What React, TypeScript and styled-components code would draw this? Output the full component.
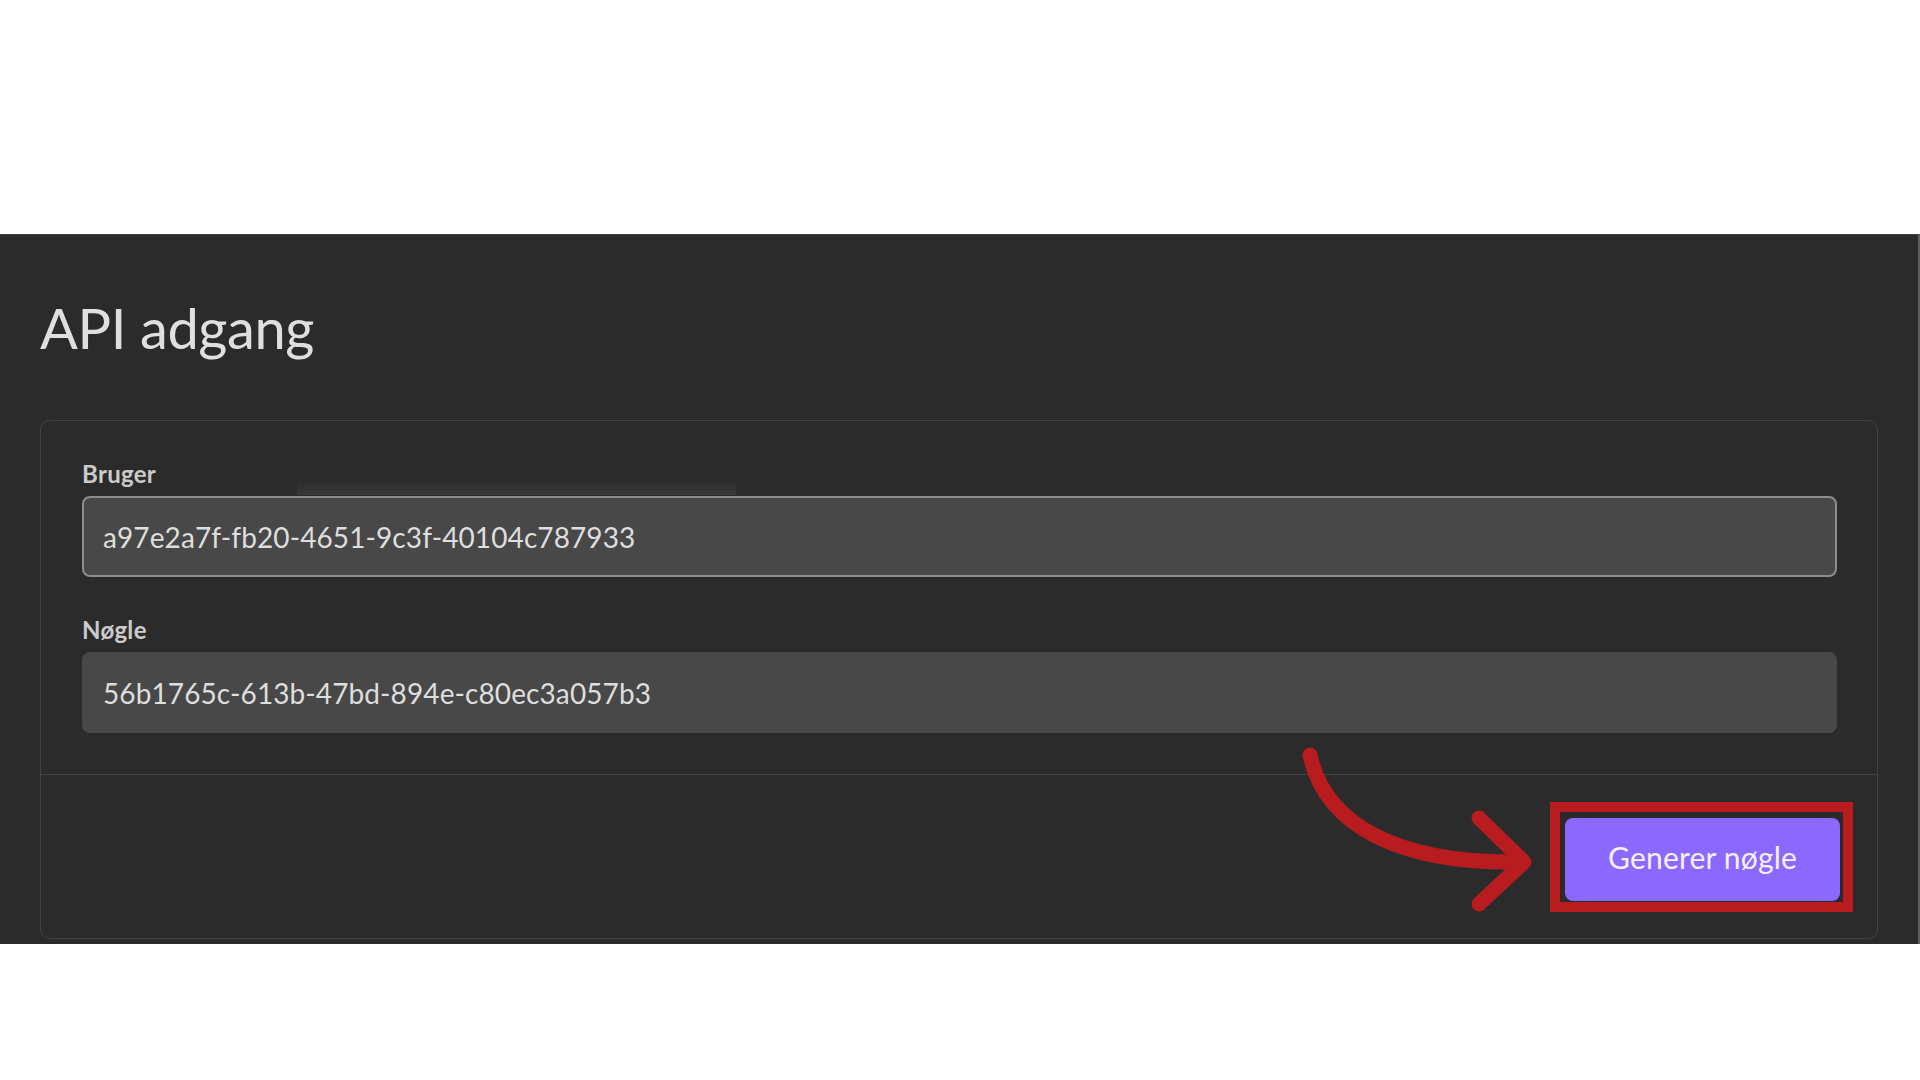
import React from 'react';
import styled, { createGlobalStyle } from 'styled-components';

const GlobalStyle = createGlobalStyle`
  html, body {
    margin: 0;
    padding: 0;
    background: #ffffff;
  }
  body {
    font-family: Lato, "Open Sans", "Liberation Sans", sans-serif;
  }
`;

const Page = styled.div`
  position: relative;
  width: 1920px;
  height: 1080px;
  padding-top: 234px;
  box-sizing: border-box;
`;

const Panel = styled.section`
  box-sizing: border-box;
  width: 1920px;
  background: #2b2b2b;
  border-top: 1px solid #3d3d3d;
  border-right: 2px solid #5e5e5e;
  padding: 59px 40px 5px 40px;
  display: flex;
  flex-direction: column;
`;

const Title = styled.h1`
  margin: 0 0 58px 0;
  font-size: 56px;
  line-height: 68px;
  font-weight: 400;
  color: #dfdfdf;
  letter-spacing: -0.4px;
`;

const Card = styled.div`
  border: 1px solid #434343;
  border-radius: 10px;
  display: flex;
  flex-direction: column;
`;

const CardBody = styled.div`
  padding: 39px 40px 41px 41px;
  display: flex;
  flex-direction: column;
  gap: 39px;
`;

const Field = styled.div`
  display: flex;
  flex-direction: column;
  gap: 8px;
`;

const Label = styled.label`
  font-size: 24px;
  line-height: 28px;
  font-weight: 700;
  color: #cbcbcb;
  letter-spacing: 0.3px;
`;

const TextInput = styled.input<{ $outlined?: boolean }>`
  box-sizing: border-box;
  width: 100%;
  height: 81px;
  padding: 0 19px;
  border-radius: 8px;
  border: 2px solid ${(p) => (p.$outlined ? '#8d8d8d' : '#484848')};
  background: #484848;
  color: #dedede;
  font-family: Lato, "Open Sans", "Liberation Sans", sans-serif;
  font-size: 28px;
  letter-spacing: 0.1px;
  outline: none;
`;

const CardFooter = styled.div`
  border-top: 1px solid #434343;
  padding: 43px 37px 37px 0;
  display: flex;
  justify-content: flex-end;
`;

const PrimaryButton = styled.button`
  width: 275px;
  height: 83px;
  padding: 0 0 6px 0;
  border: none;
  border-radius: 8px;
  background: #8c69fe;
  color: #f4f0ff;
  font-family: Lato, "Open Sans", "Liberation Sans", sans-serif;
  font-size: 30px;
  letter-spacing: 0.2px;
  cursor: pointer;
`;

const HighlightBox = styled.div`
  position: absolute;
  left: 1550px;
  top: 802px;
  width: 303px;
  height: 110px;
  box-sizing: border-box;
  border: 10px solid #b81c1f;
  pointer-events: none;
`;

const ArrowSvg = styled.svg`
  position: absolute;
  left: 1280px;
  top: 730px;
  pointer-events: none;
`;

const TooltipShade = styled.div`
  position: absolute;
  left: 297px;
  top: 480px;
  width: 439px;
  height: 15px;
  background: linear-gradient(to bottom, rgba(255, 255, 255, 0), rgba(255, 255, 255, 0.07));
  pointer-events: none;
`;

export default function App() {
  return (
    <>
      <GlobalStyle />
      <Page>
        <Panel>
          <Title>API adgang</Title>
          <Card>
            <CardBody>
              <Field>
                <Label>Bruger</Label>
                <TextInput $outlined readOnly defaultValue="a97e2a7f-fb20-4651-9c3f-40104c787933" />
              </Field>
              <Field>
                <Label>Nøgle</Label>
                <TextInput readOnly defaultValue="56b1765c-613b-47bd-894e-c80ec3a057b3" />
              </Field>
            </CardBody>
            <CardFooter>
              <PrimaryButton>Generer nøgle</PrimaryButton>
            </CardFooter>
          </Card>
        </Panel>
        <TooltipShade />
        <ArrowSvg width="270" height="200" viewBox="0 0 270 200">
          <g fill="none" stroke="#b81c1f" strokeWidth="15" strokeLinecap="round" strokeLinejoin="round">
            <path d="M30 25 C 45 95, 118 134, 240 132" />
            <path d="M199 88 L 244 132 L 199 174" />
          </g>
        </ArrowSvg>
        <HighlightBox />
      </Page>
    </>
  );
}
